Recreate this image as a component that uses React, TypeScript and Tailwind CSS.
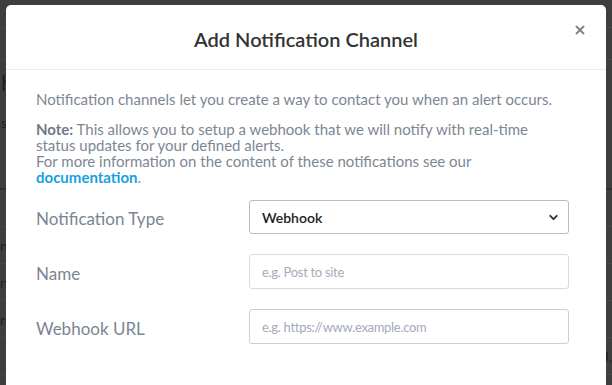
import { X, ChevronDown } from "lucide-react";

const font = { fontFamily: "'Source Sans Pro', Lato, 'Liberation Sans', sans-serif" };

function PageBehind() {
  // dimmed page under the modal overlay; only the edges peek out
  const rows = ["ne", "n", "ri", ""];
  return (
    <div className="flex h-[385px] w-[612px] flex-col bg-[#3e3e3e]">
      <div className="h-[28px] border-b border-[#474747]" />
      <div className="h-[32px] border-b border-[#474747]" />
      <div className="h-[44px] pl-[1px] pt-[12px] text-[22px] leading-none text-[#1f1f1f]">h</div>
      <div className="h-[86px] border-b-2 border-[#2f2f2f] pl-[1px] pt-[12px] text-[14px] leading-none text-[#222]">s</div>
      <div className="h-[37px] border-b border-[#474747]" />
      {rows.map((r, i) => (
        <div key={i} className="flex h-[37px] items-center justify-between border-b border-[#474747] text-[14px] text-[#222]">
          <span>{r}</span>
          <span>{i === 3 ? "J." : ""}</span>
        </div>
      ))}
    </div>
  );
}

function Field({ label, children }: { label: string; children: React.ReactNode }) {
  return (
    <div className="flex items-center">
      <label className="w-[213px] pt-[4px] text-[17px] text-[#7b8591]">{label}</label>
      <div className="w-[320px]">{children}</div>
    </div>
  );
}

export default function App() {
  return (
    <div className="relative h-[385px] w-[612px] overflow-hidden" style={font}>
      <PageBehind />

      <div className="absolute left-[6px] top-[5px] h-[420px] w-[600px] rounded-t-[5px] bg-white">
        <div className="relative flex h-[65px] items-center justify-center border-b border-[#e9ecef]">
          <h2 className="mt-[3px] text-[20px] font-semibold text-[#333]">Add Notification Channel</h2>
          <button className="absolute right-[19px] top-[18px] text-[#7d8590]">
            <X size={14} strokeWidth={3.5} />
          </button>
        </div>

        <div className="px-[30px] pt-[18px] text-[15px] text-[#7d8793]">
          <p className="leading-[22px]">Notification channels let you create a way to contact you when an alert occurs.</p>
          <p className="mt-[11px] leading-[16px]">
            <b className="font-bold text-[#6f7a86]">Note:</b> This allows you to setup a webhook that we will notify with real-time
            <br />
            status updates for your defined alerts.
            <br />
            For more information on the content of these notifications see our
            <br />
            <a className="font-bold text-[#1a9fe0]">documentation</a>.
          </p>

          <div className="mt-[15px] flex flex-col gap-[20px]">
            <Field label="Notification Type">
              <div className="flex h-[34px] items-center justify-between rounded-[3px] border border-[#b7bccb] pl-[12px] pr-[8px]">
                <span className="text-[14px] font-semibold text-[#222]" style={{ fontFamily: "Lato, sans-serif" }}>Webhook</span>
                <ChevronDown size={13} strokeWidth={3.5} className="text-[#333]" />
              </div>
            </Field>
            <Field label="Name">
              <input
                className="h-[35px] w-full rounded-[3px] border border-[#d8dbe3] px-[12px] text-[13px] tracking-[-0.3px] placeholder:text-[#a3aabb]"
                placeholder="e.g. Post to site"
              />
            </Field>
            <Field label="Webhook URL">
              <input
                className="h-[35px] w-full rounded-[3px] border border-[#c9cdd8] px-[12px] text-[13px] tracking-[-0.3px] placeholder:text-[#a3aabb]"
                placeholder="e.g. https://www.example.com"
              />
            </Field>
          </div>
        </div>
      </div>
    </div>
  );
}
